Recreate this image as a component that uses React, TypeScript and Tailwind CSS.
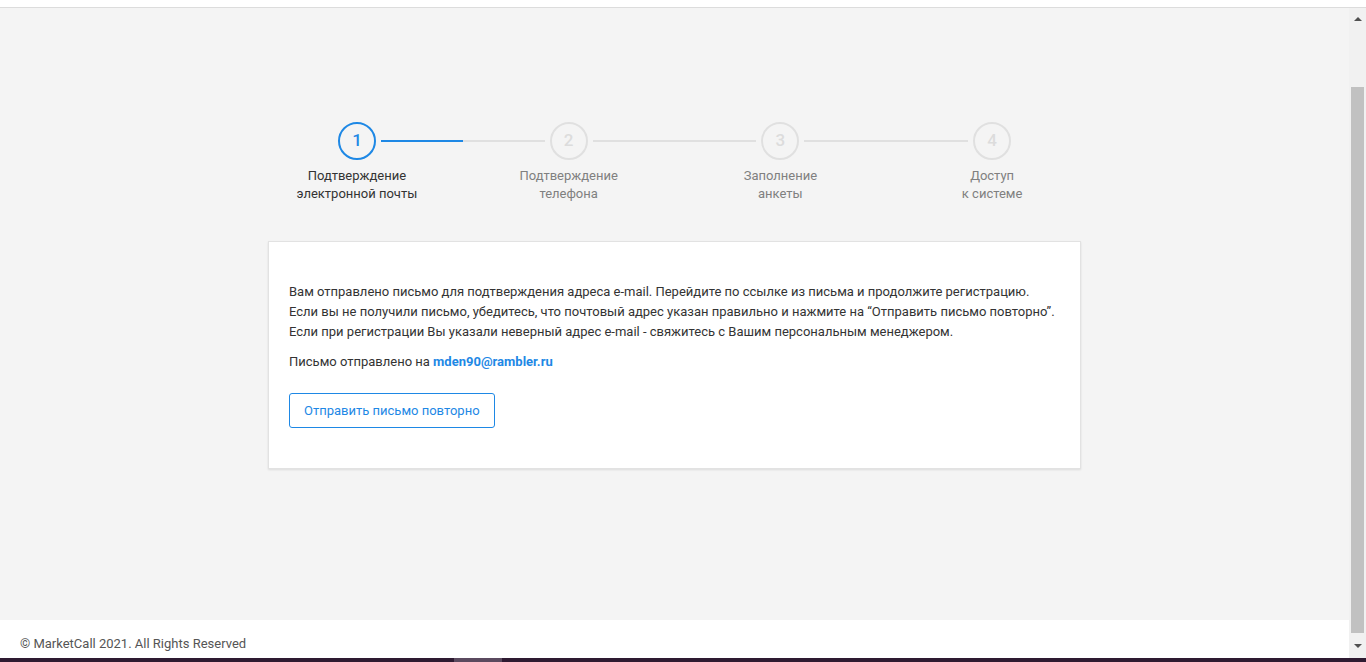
const steps = [
  { n: 1, l1: "Подтверждение", l2: "электронной почты" },
  { n: 2, l1: "Подтверждение", l2: "телефона" },
  { n: 3, l1: "Заполнение", l2: "анкеты" },
  { n: 4, l1: "Доступ", l2: "к системе" },
];

function Stepper() {
  return (
    <div className="mx-auto w-[847px]">
      <div className="flex items-center px-[87px]">
        {steps.map((s, i) => (
          <div key={s.n} className={i < steps.length - 1 ? "flex flex-1 items-center" : "flex items-center"}>
            <div
              className={
                "flex h-[38px] w-[38px] shrink-0 items-center justify-center rounded-full border-2 text-[17px] font-medium " +
                (s.n === 1
                  ? "border-[#1e88e5] text-[#1e88e5]"
                  : "border-[#e0e0e0] text-[#dcdcdc]")
              }
            >
              {s.n}
            </div>
            {i < steps.length - 1 && (
              <div className="mx-[5px] flex h-[2px] flex-1 bg-[#e0e0e0]">
                {i === 0 && <div className="h-full w-1/2 bg-[#1e88e5]" />}
              </div>
            )}
          </div>
        ))}
      </div>
      <div className="mt-[7px] grid grid-cols-4 text-center text-[13px] leading-[18px]">
        {steps.map((s) => (
          <div key={s.n} className={s.n === 1 ? "text-[#333]" : "text-[#808080]"}>
            <div>{s.l1}</div>
            <div>{s.l2}</div>
          </div>
        ))}
      </div>
    </div>
  );
}

function Scrollbar() {
  return (
    <div className="flex w-[17px] flex-col items-center bg-[#f1f1f1]">
      <div className="flex h-[14px] w-full items-end justify-center pb-[1px]">
        <div className="h-0 w-0 border-x-[4px] border-b-[4px] border-x-transparent border-b-[#505050]" />
      </div>
      <div className="flex-1" />
      <div className="h-[546px] w-[13px] bg-[#c1c1c1]" />
      <div className="flex h-[25px] w-full items-center justify-center">
        <div className="h-0 w-0 border-x-[4px] border-t-[4px] border-x-transparent border-t-[#505050]" />
      </div>
    </div>
  );
}

export default function App() {
  return (
    <div
      className="flex h-[662px] w-full flex-col overflow-hidden"
      style={{ fontFamily: "Roboto, 'Noto Sans', sans-serif" }}
    >
      <div className="h-[8px] border-b border-[#dcdcdc] bg-white" />
      <div className="flex flex-1">
        <div className="flex flex-1 flex-col bg-[#f4f4f4]">
          <main className="flex-1 pt-[114px]">
            <Stepper />
            <div className="mx-auto mt-[38px] w-[813px] border border-[#e2e2e2] bg-white px-[20px] pb-[40px] pt-[40px] shadow-[0_1px_2px_rgba(0,0,0,0.1)]">
              <div className="text-[13px] leading-[20px] text-[#333]">
                <p>
                  Вам отправлено письмо для подтверждения адреса e-mail. Перейдите по ссылке из письма и продолжите регистрацию.
                </p>
                <p>
                  Если вы не получили письмо, убедитесь, что почтовый адрес указан правильно и нажмите на “Отправить письмо повторно”.
                </p>
                <p>
                  Если при регистрации Вы указали неверный адрес e-mail - свяжитесь с Вашим персональным менеджером.
                </p>
                <p className="mt-[10px]">
                  Письмо отправлено на{" "}
                  <span className="font-bold text-[#1e88e5]">mden90@rambler.ru</span>
                </p>
              </div>
              <button
                type="button"
                className="mt-[21px] h-[35px] rounded-[3px] border border-[#1e88e5] px-[14px] text-[13px] text-[#1e88e5]"
              >
                Отправить письмо повторно
              </button>
            </div>
          </main>
          <footer className="h-[38px] bg-white pl-[20px] pt-[14px] text-[13px] leading-[20px] text-[#555]">
            © MarketCall 2021. All Rights Reserved
          </footer>
        </div>
        <Scrollbar />
      </div>
      <div className="flex h-[4px] bg-[#2e1a31]">
        <div className="w-[454px]" />
        <div className="w-[48px] bg-[#5b4a5f]" />
      </div>
    </div>
  );
}
